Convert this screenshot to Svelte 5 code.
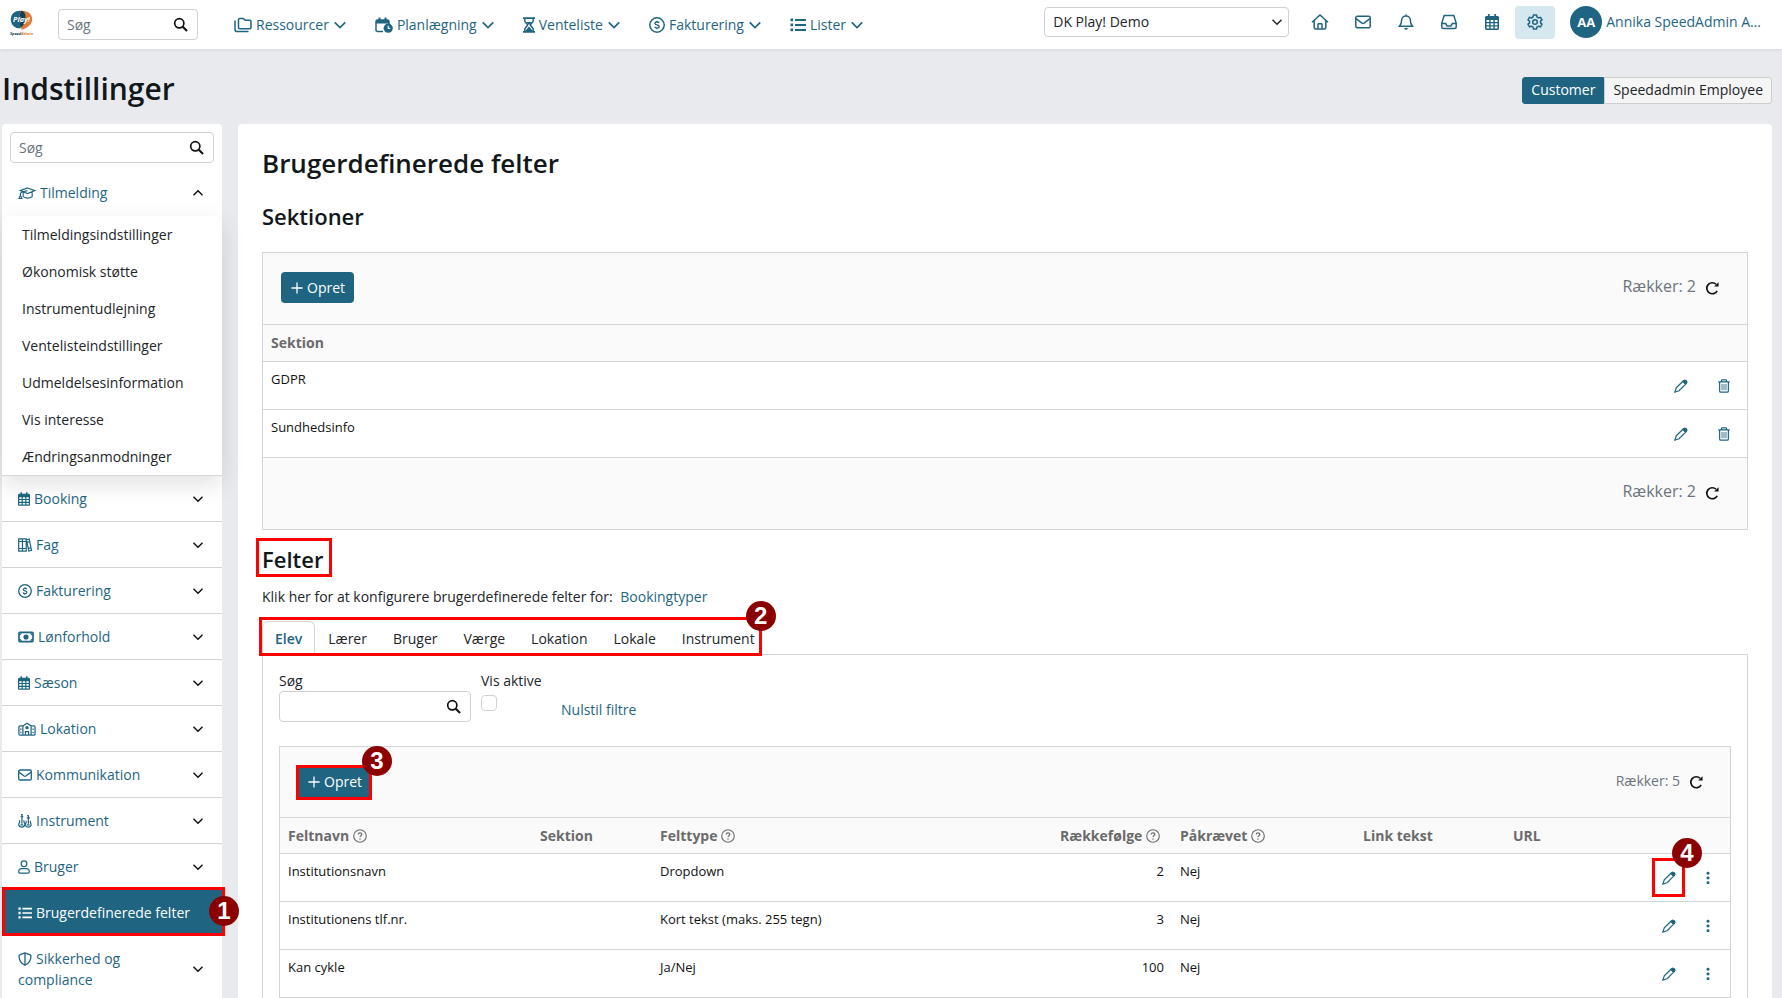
<script lang="ts">
  type Icon = { w: number; body: string };

  // every icon is drawn on a 16px high grid, w is its width on that grid
  const icons: Record<string, Icon> = {
    search: { w: 16, body: '<circle cx="6.7" cy="6.7" r="4.9" stroke-width="1.8"/><path d="M10.4 10.4 15 15" stroke-width="2.2"/>' },
    down: { w: 16, body: '<path d="M2 5l6 6 6-6" stroke-width="1.9"/>' },
    up: { w: 16, body: '<path d="M2 11l6-6 6 6" stroke-width="1.9"/>' },
    folders: { w: 18, body: '<path d="M4.5 2.6c0-.7.5-1.2 1.2-1.2h3.6l1.9 1.9h4.6c.7 0 1.2.5 1.2 1.2v6c0 .7-.5 1.2-1.2 1.2H5.7c-.7 0-1.2-.5-1.2-1.2z"/><path d="M1 3.6v8.8c0 1.2.9 2.1 2.1 2.1h11.4"/>' },
    planning: { w: 18, body: '<path d="M8 14.5H2.6c-.9 0-1.6-.7-1.6-1.6V4.6C1 3.7 1.7 3 2.6 3h9.8c.9 0 1.6.7 1.6 1.6V7"/><path d="M1 3h13v3.500H1z" fill="currentColor" stroke="none"/><path d="M4.500.500V4M10.500.500V4" stroke-width="2"/><circle cx="13.200" cy="11.200" r="4.600" fill="currentColor" stroke="none"/><path d="M13.200 8.800v2.600h2" stroke="#fff" stroke-width="1.100"/>' },
    hourglass: { w: 12, body: '<path d="M0 .2h12v1.900H0zM0 13.900h12v1.900H0z" fill="currentColor" stroke="none"/><path d="M1.800 2v1.700C1.800 5.900 4.600 6.700 4.600 8s-2.800 2.100-2.800 4.300V14M10.200 2v1.700C10.200 5.900 7.400 6.700 7.400 8s2.800 2.100 2.800 4.300V14" stroke-width="1.500"/><path d="M3 5h6L6 8zM6 9.500l3.800 4.500H2.200z" fill="currentColor" stroke="none"/>' },
    dollar: { w: 16, body: '<circle cx="8" cy="8" r="7.200" stroke-width="1.500"/><path d="M10.100 6.100c-.3-.7-1.100-1.100-2.100-1.100-1.200 0-2.100.5-2.100 1.400 0 2.100 4.300.9 4.300 3.100 0 .9-.9 1.500-2.200 1.500-1.100 0-2-.5-2.300-1.300M8 3.800V5m0 6v1.200" stroke-width="1.300"/>' },
    list: { w: 16, body: '<path d="M5 3h11M5 8h11M5 13h11" stroke-width="1.800"/><path d="M.5 1.600h2.600v2.700H.5zM.5 6.600h2.600v2.700H.5zM.5 11.600h2.600v2.700H.5z" fill="currentColor" stroke="none"/>' },
    home: { w: 18, body: '<path d="M1 8.200 9 1l8 7.200M3.200 6.500v7c0 .9.6 1.500 1.500 1.500h8.600c.9 0 1.500-.6 1.500-1.500v-7M7 15v-4.500c0-.4.3-.7.7-.7h2.600c.4 0 .7.3.7.7V15"/>' },
    mail: { w: 16, body: '<rect x=".8" y="2.300" width="14.400" height="11.400" rx="1.500" stroke-width="1.500"/><path d="M1 4.700 7 9.200c.6.400 1.400.4 2 0l6-4.500" stroke-width="1.500"/>' },
    bell: { w: 16, body: '<path d="M8 .4v1.400M3.600 6.400C3.600 3.900 5.500 2 8 2s4.400 1.900 4.400 4.400c0 3.300 1 4.600 2.100 5.900H1.500c1.100-1.300 2.100-2.600 2.100-5.900z"/><path d="M6.200 14h3.600c0 1-.8 1.800-1.800 1.800S6.200 15 6.200 14z" fill="currentColor" stroke="none"/>' },
    inbox: { w: 16, body: '<path d="M3.200 1.500h9.600L15.200 9v4c0 .9-.6 1.500-1.500 1.500H2.300C1.400 14.500.8 13.900.8 13V9zM1 9.600h3.700l1.400 2.300h3.800l1.400-2.300H15"/>' },
    calendar: { w: 14, body: '<path d="M3.800 0v3M10.200 0v3" stroke-width="1.800"/><path fill="currentColor" stroke="none" fill-rule="evenodd" d="M1.500 2h11C13.300 2 14 2.700 14 3.500v11c0 .8-.7 1.500-1.500 1.500h-11C.7 16 0 15.300 0 14.500v-11C0 2.700.7 2 1.500 2zm0 4v2h2.700V6zm4.100 0v2h2.800V6zm4.200 0v2h2.700V6zM1.500 9.300v2h2.700v-2zm4.100 0v2h2.800v-2zm4.200 0v2h2.700v-2zM1.500 12.600v1.900h2.700v-1.900zm4.100 0v1.900h2.800v-1.900zm4.200 0v1.900h2.700v-1.900z"/>' },
    gear: { w: 16, body: '<circle cx="8" cy="8" r="2.300"/><path d="M6.500 1h3l.5 2 1.500.9 2-.6 1.500 2.600-1.500 1.400v1.500l1.500 1.400-1.500 2.600-2-.6-1.500.9-.5 1.900h-3L6 13.100l-1.500-.9-2 .6L1 10.200l1.500-1.400V7.300L1 5.900l1.500-2.600 2 .6L6 3z"/>' },
    cap: { w: 20, body: '<path d="M10.500 2.200 19 5.300l-8.500 3.300L2.300 5.300zM5.600 7v5.200c2.700 2.300 7.600 2.300 10.300 0V7M10.500 5.300 4.200 6.800C2.400 7.300 2.200 9 2.400 11M2.500 10.500.8 14.300h3.300z" stroke-width="1.300"/>' },
    books: { w: 16, body: '<path d="M.8 1h4.300v14H.8zM5.100 1h4.300v14H5.100zM9.600 2l3.200-.9L15.400 14l-3.100.9zM.8 4h8.600M.8 12h8.600M10 5l3.300-.8M11.500 12l3.200-.8" stroke-width="1.400"/>' },
    money: { w: 18, body: '<rect x="1" y="2.800" width="16" height="10.400" rx="1" stroke-width="1.900"/><circle cx="9" cy="8" r="2.900" fill="currentColor" stroke="none"/><path d="M1 5.500c1.500 0 2.500-1 2.500-2.500M17 5.500c-1.500 0-2.500-1-2.500-2.500M1 10.500c1.500 0 2.500 1 2.500 2.500M17 10.500c-1.500 0-2.500 1-2.500 2.500" stroke-width="1.200"/>' },
    school: { w: 20, body: '<path d="M5.300 4.500 10 1.300l4.700 3.200V15M5.300 4.500V15M5.300 4.500H2.200c-.8 0-1.400.6-1.400 1.400v7.700c0 .8.6 1.400 1.400 1.400h15.600c.8 0 1.400-.6 1.400-1.400V5.900c0-.8-.6-1.400-1.400-1.400h-3.100M8.200 15v-4h3.600v4M3 7.500v1.700M3 11v1.700M17 7.500v1.700M17 11v1.700" stroke-width="1.400"/><circle cx="10" cy="6.500" r="1.900" fill="currentColor" stroke="none"/>' },
    guitars: { w: 16, body: '<path d="M3.500.8h2M4.500.8V11M3 3h3M10.500 1.800h2M11.800 1.800V11M10 4.300h3.600M2.400 7.300C1.300 8 2.200 9.300 1.300 10.500.2 12 1 15 4.300 15s4.200-3 3.100-4.500c-.9-1.200 0-2.500-1.100-3.200M9.700 7.900c-1 .7-.1 1.800-.8 2.900-.8 1.600-.3 4.200 2.800 4.200s3.900-2.600 2.900-4.200c-.7-1.100.1-2.200-.9-2.900M2.800 12.500H6M10.300 12.500h3" stroke-width="1.400"/>' },
    user: { w: 14, body: '<circle cx="7" cy="4.200" r="3.300" stroke-width="1.400"/><path d="M.8 13.600C.8 11.500 2.500 10 4.600 10h4.800c2.100 0 3.800 1.500 3.800 3.600 0 1-.6 1.600-1.500 1.600H2.300c-.9 0-1.500-.6-1.500-1.600z" stroke-width="1.400"/>' },
    shield: { w: 16, body: '<path d="M8 1 2 3.300C1.500 3.500 1.200 4 1.200 4.500c0 4 1.800 8.300 6.800 10.500 5-2.200 6.800-6.500 6.800-10.500 0-.5-.3-1-.8-1.200zM8 1v14" stroke-width="1.500"/>' },
    plus: { w: 14, body: '<path d="M7 1.500v13M.500 8h13" stroke-width="1.500"/>' },
    refresh: { w: 16, body: '<path d="M12.600 3.600A6.300 6.300 0 1 0 13.900 11.300" stroke-width="1.900"/><path d="M15.500 1.400v5H10.400z" fill="currentColor" stroke="none"/>' },
    pencil: { w: 16, body: '<path d="M10.200 2.600 2.600 10.200 1 15l4.800-1.600 7.600-7.600M10.200 2.600c1-1 2.700-1.400 3.800-.3s.4 2.600-.6 3.500z" stroke-width="1.400"/><path d="M9.700 3.200 11.600.9C13.500.2 15.700 2 15.200 4.300l-2.300 2z" fill="currentColor" stroke="none"/>' },
    trash: { w: 14, body: '<path d="M.3 3.200h13.400M4 3V1.700C4 1.100 4.400.8 5 .8h4c.6 0 1 .3 1 .9V3M1.900 3.400v10.300c0 .9.600 1.500 1.500 1.500h7.200c.9 0 1.500-.6 1.500-1.500V3.400" stroke-width="1.400"/><path d="M4.700 5.600v7.300M7 5.600v7.300M9.300 5.600v7.300" stroke-width="1"/>' },
    help: { w: 16, body: '<circle cx="8" cy="8" r="7.200" stroke-width="1.300"/><path d="M5.900 6.200c.1-1.200.9-1.900 2.100-1.900s2.100.7 2.100 1.800c0 1.500-2.100 1.500-2.100 3.100" stroke-width="1.400"/><circle cx="8" cy="11.400" r=".9" fill="currentColor" stroke="none"/>' },
    dots: { w: 4, body: '<g fill="currentColor" stroke="none"><circle cx="2" cy="2.500" r="1.700"/><circle cx="2" cy="8" r="1.700"/><circle cx="2" cy="13.500" r="1.700"/></g>' }
  };

  const nav = [
    { label: 'Ressourcer', icon: 'folders' },
    { label: 'Planlægning', icon: 'planning' },
    { label: 'Venteliste', icon: 'hourglass' },
    { label: 'Fakturering', icon: 'dollar' },
    { label: 'Lister', icon: 'list' }
  ];

  const tools = [
    { label: 'Hjem', icon: 'home' },
    { label: 'Beskeder', icon: 'mail' },
    { label: 'Notifikationer', icon: 'bell' },
    { label: 'Indbakke', icon: 'inbox' },
    { label: 'Kalender', icon: 'calendar' },
    { label: 'Indstillinger', icon: 'gear' }
  ];

  const enrolment = [
    'Tilmeldingsindstillinger',
    'Økonomisk støtte',
    'Instrumentudlejning',
    'Ventelisteindstillinger',
    'Udmeldelsesinformation',
    'Vis interesse',
    'Ændringsanmodninger'
  ];

  const groups = [
    { label: 'Booking', icon: 'calendar' },
    { label: 'Fag', icon: 'books' },
    { label: 'Fakturering', icon: 'dollar' },
    { label: 'Lønforhold', icon: 'money' },
    { label: 'Sæson', icon: 'calendar' },
    { label: 'Lokation', icon: 'school' },
    { label: 'Kommunikation', icon: 'mail' },
    { label: 'Instrument', icon: 'guitars' },
    { label: 'Bruger', icon: 'user' }
  ];

  const sections = ['GDPR', 'Sundhedsinfo'];
  const tabs = ['Elev', 'Lærer', 'Bruger', 'Værge', 'Lokation', 'Lokale', 'Instrument'];

  const fields = [
    { name: 'Institutionsnavn', type: 'Dropdown', order: 2, required: 'Nej' },
    { name: 'Institutionens tlf.nr.', type: 'Kort tekst (maks. 255 tegn)', order: 3, required: 'Nej' },
    { name: 'Kan cykle', type: 'Ja/Nej', order: 100, required: 'Nej' }
  ];

  let activeTab = $state('Elev');
  let role = $state('Customer');
  let open = $state(true);
  let query = $state('');
  let onlyActive = $state(false);

  function resetFilters(e: MouseEvent) {
    e.preventDefault();
    query = '';
    onlyActive = false;
  }
</script>

{#snippet icon(name: string, size = 16)}
  <svg
    class="icon"
    viewBox="0 0 {icons[name].w} 16"
    width={Math.round((icons[name].w * size) / 16)}
    height={size}
    aria-hidden="true">{@html icons[name].body}</svg>
{/snippet}

{#snippet rowCount(n: number)}
  <div class="count">
    <span>Rækker: {n}</span>
    <button class="plain" aria-label="Opdater">{@render icon('refresh', 14)}</button>
  </div>
{/snippet}

<svelte:head>
  <title>Indstillinger</title>
</svelte:head>

<div class="app">
  <header class="topbar">
    <a class="logo" href="#home" aria-label="SpeedAdmin Play!">
      <svg viewBox="0 0 44 48" width="25" height="27">
        <path d="M21 34C10 35 3 28 3 18S11 2 22 3c-5 6-3 10 1 15-4 4-5 10-2 16z" fill="#1f6582" />
        <path d="M22 3c11-1 19 6 19 15S33 34 21 37c2-3 1-7 0-9 3-3 4-6 2-10-4-5-6-9-1-15z" fill="#e07a35" />
        <path d="M22 3c5 1 8 6 7 14-1 8-4 12-8 17-3-6-2-12 2-16-4-5-6-9-1-15z" fill="#143f55" />
        <text x="22" y="23" class="logo-play">Play!</text>
        <text x="22" y="46" class="logo-name">Speed<tspan fill="#e07a35">Admin</tspan></text>
      </svg>
    </a>

    <form class="search top-search" role="search">
      <input type="text" placeholder="Søg" aria-label="Søg" />
      <button class="plain" type="button" aria-label="Søg">{@render icon('search', 15)}</button>
    </form>

    <nav class="menu">
      {#each nav as item}
        <a href="#{item.icon}">
          {@render icon(item.icon)}
          <span>{item.label}</span>
          {@render icon('down', 14)}
        </a>
      {/each}
    </nav>

    <div class="account">
      <div class="school">
        <select aria-label="Skole">
          <option>DK Play! Demo</option>
        </select>
        {@render icon('down', 12)}
      </div>
      <div class="tools">
        {#each tools as tool}
          <button class="plain" class:current={tool.icon === 'gear'} aria-label={tool.label}>
            {@render icon(tool.icon)}
          </button>
        {/each}
      </div>
      <a class="user" href="#profile">
        <span class="avatar">AA</span>
        <span>Annika SpeedAdmin A…</span>
      </a>
    </div>
  </header>

  <div class="titlebar">
    <h1>Indstillinger</h1>
    <div class="roles">
      {#each ['Customer', 'Speedadmin Employee'] as name}
        <button class:on={role === name} onclick={() => (role = name)}>{name}</button>
      {/each}
    </div>
  </div>

  <div class="body">
    <aside class="sidebar">
      <form class="search side-search" role="search">
        <input type="text" placeholder="Søg" aria-label="Søg i indstillinger" />
        <button class="plain" type="button" aria-label="Søg">{@render icon('search', 15)}</button>
      </form>

      <button class="group first" onclick={() => (open = !open)}>
        <span>{@render icon('cap', 14)}Tilmelding</span>
        {@render icon(open ? 'up' : 'down', 12)}
      </button>
      {#if open}
        <div class="submenu">
          {#each enrolment as label}
            <a href="#{label}">{label}</a>
          {/each}
        </div>
      {/if}

      {#each groups as group}
        <button class="group">
          <span>{@render icon(group.icon, 14)}{group.label}</span>
          {@render icon('down', 12)}
        </button>
      {/each}

      <div class="marked">
        <a class="group active" href="#felter">
          <span>{@render icon('list', 14)}Brugerdefinerede felter</span>
        </a>
        <i class="frame frame-side"></i>
        <b class="step step-side">1</b>
      </div>

      <button class="group two-line">
        <span>{@render icon('shield', 14)}Sikkerhed og compliance</span>
        {@render icon('down', 12)}
      </button>
    </aside>

    <main class="content">
      <h2>Brugerdefinerede felter</h2>
      <h3>Sektioner</h3>

      <section class="grid">
        <div class="toolbar">
          <button class="create">{@render icon('plus', 14)}Opret</button>
          {@render rowCount(2)}
        </div>
        <table>
          <colgroup><col /><col class="c-pencil" /><col class="c-trash" /></colgroup>
          <thead>
            <tr><th>Sektion</th><th></th><th></th></tr>
          </thead>
          <tbody>
            {#each sections as section}
              <tr>
                <td>{section}</td>
                <td class="action"><button class="plain" aria-label="Rediger">{@render icon('pencil', 14)}</button></td>
                <td class="action"><button class="plain" aria-label="Slet">{@render icon('trash', 14)}</button></td>
              </tr>
            {/each}
          </tbody>
        </table>
        <div class="toolbar footer">{@render rowCount(2)}</div>
      </section>

      <h3 class="fields-title">
        <span class="marked">Felter<i class="frame frame-title"></i></span>
      </h3>
      <p class="hint">
        Klik her for at konfigurere brugerdefinerede felter for: <a href="#bookingtyper">Bookingtyper</a>
      </p>

      <div class="tabs marked" role="tablist">
        {#each tabs as tab}
          <button role="tab" aria-selected={activeTab === tab} onclick={() => (activeTab = tab)}>{tab}</button>
        {/each}
        <i class="frame frame-tabs"></i>
        <b class="step step-tabs">2</b>
      </div>

      <div class="panel">
        <div class="filters">
          <div class="filter">
            <label for="field-search">Søg</label>
            <div class="search field-search">
              <input id="field-search" type="text" bind:value={query} />
              <button class="plain" type="button" aria-label="Søg">{@render icon('search', 15)}</button>
            </div>
          </div>
          <div class="filter only-active">
            <label for="only-active">Vis aktive</label>
            <input id="only-active" type="checkbox" bind:checked={onlyActive} />
          </div>
          <a class="reset" href="#reset" onclick={resetFilters}>Nulstil filtre</a>
        </div>

        <section class="grid compact">
          <div class="toolbar">
            <div class="marked">
              <button class="create">{@render icon('plus', 14)}Opret</button>
              <i class="frame frame-create"></i>
              <b class="step step-create">3</b>
            </div>
            {@render rowCount(5)}
          </div>
          <table>
            <colgroup>
              <col class="c-name" /><col class="c-section" /><col /><col class="c-order" />
              <col class="c-required" /><col class="c-link" /><col class="c-url" />
              <col class="c-edit" /><col class="c-more" />
            </colgroup>
            <thead>
              <tr>
                <th>Feltnavn {@render icon('help', 14)}</th>
                <th>Sektion</th>
                <th>Felttype {@render icon('help', 14)}</th>
                <th class="num">Rækkefølge {@render icon('help', 14)}</th>
                <th>Påkrævet {@render icon('help', 14)}</th>
                <th>Link tekst</th>
                <th>URL</th>
                <th></th>
                <th></th>
              </tr>
            </thead>
            <tbody>
              {#each fields as field, i}
                <tr>
                  <td>{field.name}</td>
                  <td></td>
                  <td>{field.type}</td>
                  <td class="num">{field.order}</td>
                  <td>{field.required}</td>
                  <td></td>
                  <td></td>
                  <td class="action">
                    <span class="marked">
                      <button class="plain" aria-label="Rediger">{@render icon('pencil', 14)}</button>
                      {#if i === 0}
                        <i class="frame frame-edit"></i>
                        <b class="step step-edit">4</b>
                      {/if}
                    </span>
                  </td>
                  <td class="action"><button class="plain" aria-label="Mere">{@render icon('dots', 14)}</button></td>
                </tr>
              {/each}
            </tbody>
          </table>
        </section>
      </div>
    </main>
  </div>
</div>

<style>
  :global(body) {
    margin: 0;
    background: #e9eaee;
  }

  .app {
    --teal: #1f6582;
    --line: #d3d5d7;
    height: 100vh;
    overflow: hidden;
    display: flex;
    flex-direction: column;
    font: 14px/20px 'Open Sans', 'Noto Sans', sans-serif;
    color: #212529;
  }

  .app *,
  .app *::before {
    box-sizing: border-box;
  }

  a {
    color: var(--teal);
    text-decoration: none;
  }

  button,
  input,
  select {
    font: inherit;
    color: inherit;
    margin: 0;
  }

  button {
    cursor: pointer;
  }

  .icon {
    flex: none;
    fill: none;
    stroke: currentColor;
    stroke-width: 1.5;
    overflow: visible;
  }

  .plain {
    display: flex;
    align-items: center;
    justify-content: center;
    padding: 0;
    border: 0;
    background: none;
  }

  /* top bar */
  .topbar {
    flex: none;
    display: flex;
    align-items: center;
    height: 49px;
    padding: 0 21px 0 9px;
    background: #fff;
    box-shadow: 0 1px 4px rgba(0, 0, 0, 0.08);
  }

  .logo {
    display: flex;
    width: 49px;
    padding-bottom: 4px;
  }

  .logo svg {
    overflow: visible;
  }

  .logo-play {
    font: italic 700 13px 'Open Sans', sans-serif;
    fill: #fff;
    text-anchor: middle;
  }

  .logo-name {
    font: italic 700 7px 'Open Sans', sans-serif;
    fill: #143f55;
    text-anchor: middle;
  }

  .search {
    display: flex;
    align-items: center;
    height: 31px;
    padding: 0 9px 0 8px;
    border: 1px solid #ced2d5;
    border-radius: 4px;
    background: #fff;
    color: #111;
  }

  .search input {
    flex: 1;
    min-width: 0;
    padding: 0;
    border: 0;
    outline: 0;
    background: none;
  }

  .search input::placeholder {
    color: #6c757d;
    opacity: 1;
  }

  .top-search {
    width: 140px;
  }

  .menu {
    display: flex;
    gap: 28px;
    margin-left: 36px;
  }

  .menu a {
    display: flex;
    align-items: center;
    gap: 4px;
  }

  .account {
    display: flex;
    align-items: center;
    margin-left: auto;
    padding-bottom: 5px;
  }

  .school {
    position: relative;
  }

  .school select {
    display: block;
    width: 245px;
    height: 30px;
    padding: 0 24px 0 8px;
    border: 1px solid #ced2d5;
    border-radius: 4px;
    appearance: none;
    background: #fff;
  }

  .school :global(.icon) {
    position: absolute;
    top: 9px;
    right: 6px;
    pointer-events: none;
  }

  .tools {
    display: flex;
    gap: 3px;
    margin: 0 15px 0 11px;
    color: var(--teal);
  }

  .tools button {
    width: 40px;
    height: 33px;
    border-radius: 4px;
  }

  .tools .current {
    background: #d5e7ef;
  }

  .user {
    display: flex;
    align-items: center;
    gap: 4px;
    white-space: nowrap;
  }

  .avatar {
    width: 32px;
    height: 32px;
    border-radius: 50%;
    background: var(--teal);
    color: #fff;
    font-size: 13px;
    font-weight: 700;
    line-height: 32px;
    text-align: center;
  }

  /* page title */
  .titlebar {
    flex: none;
    display: flex;
    align-items: center;
    justify-content: space-between;
    height: 75px;
    padding: 7px 10px 0 2px;
  }

  h1,
  h2,
  h3 {
    margin: 0;
    font-weight: 600;
    color: #11181c;
  }

  h1 {
    padding-bottom: 2px;
    font-size: 30px;
    line-height: 36px;
  }

  .roles {
    display: flex;
  }

  .roles button {
    height: 27px;
    padding: 0 8px;
    border: 1px solid #cdcdcd;
    border-radius: 0 3px 3px 0;
    background: #f5f5f5;
    line-height: 20px;
  }

  .roles button:first-child {
    border-radius: 3px 0 0 3px;
  }

  .roles .on {
    border-color: var(--teal);
    background: var(--teal);
    color: #fff;
  }

  .body {
    flex: 1;
    min-height: 0;
    display: grid;
    grid-template-columns: 220px minmax(0, 1fr);
    gap: 16px;
    padding: 0 10px 0 2px;
  }

  /* sidebar */
  .sidebar {
    border-radius: 4px 4px 0 0;
    background: #fff;
  }

  .side-search {
    margin: 8px 8px 7px;
  }

  .group {
    display: flex;
    align-items: center;
    justify-content: space-between;
    width: 100%;
    min-height: 46px;
    padding: 0 18px 0 16px;
    border: 0;
    border-bottom: 1px solid var(--line);
    background: none;
    color: #111;
    text-align: left;
  }

  .group.first {
    border-bottom: 0;
  }

  .group span {
    color: var(--teal);
  }

  .group span :global(.icon) {
    margin-right: 4px;
    vertical-align: -2px;
  }

  .group.active {
    border-bottom: 0;
    background: var(--teal);
  }

  .group.active span {
    color: #fff;
  }

  .group.two-line {
    min-height: 66px;
    line-height: 21px;
  }

  .group.two-line span {
    width: 120px;
  }

  .submenu {
    position: relative;
    border-bottom: 1px solid var(--line);
    border-radius: 6px 6px 0 0;
    background: #fff;
    box-shadow: 0 8px 24px rgba(0, 0, 0, 0.12);
  }

  .submenu a {
    display: block;
    padding: 0 20px;
    color: #212529;
    line-height: 37px;
  }

  /* content */
  .content {
    padding: 23px 24px;
    border-radius: 4px 4px 0 0;
    background: #fff;
  }

  h2 {
    margin-bottom: 23px;
    font-size: 26px;
    line-height: 32px;
  }

  h3 {
    font-size: 22px;
    line-height: 28px;
  }

  .grid {
    margin-top: 22px;
    border: 1px solid var(--line);
  }

  .toolbar {
    display: flex;
    align-items: center;
    height: 71px;
    padding: 0 28px 2px 18px;
    background: #fafafb;
  }

  .toolbar.footer {
    border-top: 1px solid var(--line);
    height: 72px;
  }

  .create {
    display: flex;
    align-items: center;
    gap: 4px;
    height: 31px;
    padding: 0 9px 0 10px;
    border: 0;
    border-radius: 4px;
    background: var(--teal);
    color: #fff;
  }

  .count {
    display: flex;
    align-items: center;
    gap: 9px;
    margin-left: auto;
    color: #6c757d;
    font-size: 16px;
  }

  .count span {
    padding-bottom: 3px;
  }

  .count button {
    color: #111;
  }

  table {
    width: 100%;
    border-collapse: separate;
    border-spacing: 0;
    table-layout: fixed;
  }

  th {
    height: 37px;
    padding: 0 8px;
    border-top: 1px solid var(--line);
    background: #fafafb;
    color: #6b6b6b;
    font-weight: 700;
    text-align: left;
  }

  th :global(.icon) {
    vertical-align: -2px;
  }

  td {
    height: 48px;
    padding: 8px;
    border-top: 1px solid var(--line);
    color: #111;
    font-size: 13px;
    line-height: 18px;
    vertical-align: top;
  }

  .num {
    text-align: right;
  }

  th.num {
    padding-right: 12px;
  }

  .action {
    padding: 0;
    color: var(--teal);
    vertical-align: middle;
  }

  .action button {
    width: 100%;
  }

  .c-pencil {
    width: 39px;
  }

  .c-trash {
    width: 47px;
  }

  .fields-title {
    margin-top: 15px;
  }

  .hint {
    margin: 14px 0;
  }

  .hint a {
    margin-left: 4px;
  }

  .tabs {
    display: flex;
    width: max-content;
    height: 33px;
  }

  .tabs button {
    padding: 2px 12px 0;
    border: 1px solid transparent;
    border-bottom: 0;
    border-radius: 6px 6px 0 0;
    background: none;
  }

  .tabs button[aria-selected='true'] {
    border-color: var(--line);
    color: var(--teal);
    font-weight: 600;
  }

  .panel {
    min-height: 400px;
    padding: 16px;
    border: 1px solid var(--line);
  }

  .filters {
    display: flex;
    gap: 10px;
  }

  .filter {
    display: flex;
    flex-direction: column;
    align-items: flex-start;
  }

  .field-search {
    width: 192px;
  }

  .only-active {
    width: 70px;
  }

  .only-active input {
    appearance: none;
    width: 16px;
    height: 16px;
    margin-top: 4px;
    border: 1px solid #ced2d5;
    border-radius: 4px;
    background: #fff;
  }

  .only-active input:checked {
    background: var(--teal);
  }

  .reset {
    align-self: flex-end;
    padding-bottom: 2px;
  }

  .compact {
    margin-top: 24px;
  }

  .compact .toolbar {
    height: 70px;
    padding-right: 27px;
    padding-bottom: 0;
  }

  .compact .count {
    font-size: 14px;
  }

  .compact th {
    height: 36px;
  }

  .c-name {
    width: 252px;
  }

  .c-section {
    width: 120px;
  }

  .c-order {
    width: 140px;
  }

  .c-required {
    width: 183px;
  }

  .c-link {
    width: 150px;
  }

  .c-url {
    width: 148px;
  }

  .c-edit {
    width: 32px;
  }

  .c-more {
    width: 45px;
  }

  /* guide frames and step numbers lying over the page */
  .marked {
    position: relative;
  }

  span.marked {
    display: inline-block;
  }

  .action span.marked {
    display: block;
  }

  .frame {
    position: absolute;
    z-index: 1;
    border: 3px solid #f00;
    pointer-events: none;
  }

  .step {
    position: absolute;
    z-index: 2;
    width: 30px;
    height: 30px;
    border-radius: 50%;
    background: #8b0000;
    color: #fff;
    font: 700 24px/30px 'Liberation Sans', sans-serif;
    text-align: center;
  }

  .frame-side {
    inset: -3px -3px 0 0;
  }

  .step-side {
    top: 6px;
    right: -17px;
  }

  .frame-title {
    inset: -7px -9px -4px -6px;
  }

  .frame-tabs {
    inset: -4px 6px -2px -3px;
  }

  .step-tabs {
    top: -20px;
    right: -8px;
  }

  .frame-create {
    inset: -2px -1px -2px -2px;
  }

  .step-create {
    top: -21px;
    right: -21px;
  }

  .frame-edit {
    inset: -13px 0 -12px -1px;
  }

  .step-edit {
    top: -33px;
    right: -17px;
  }
</style>
